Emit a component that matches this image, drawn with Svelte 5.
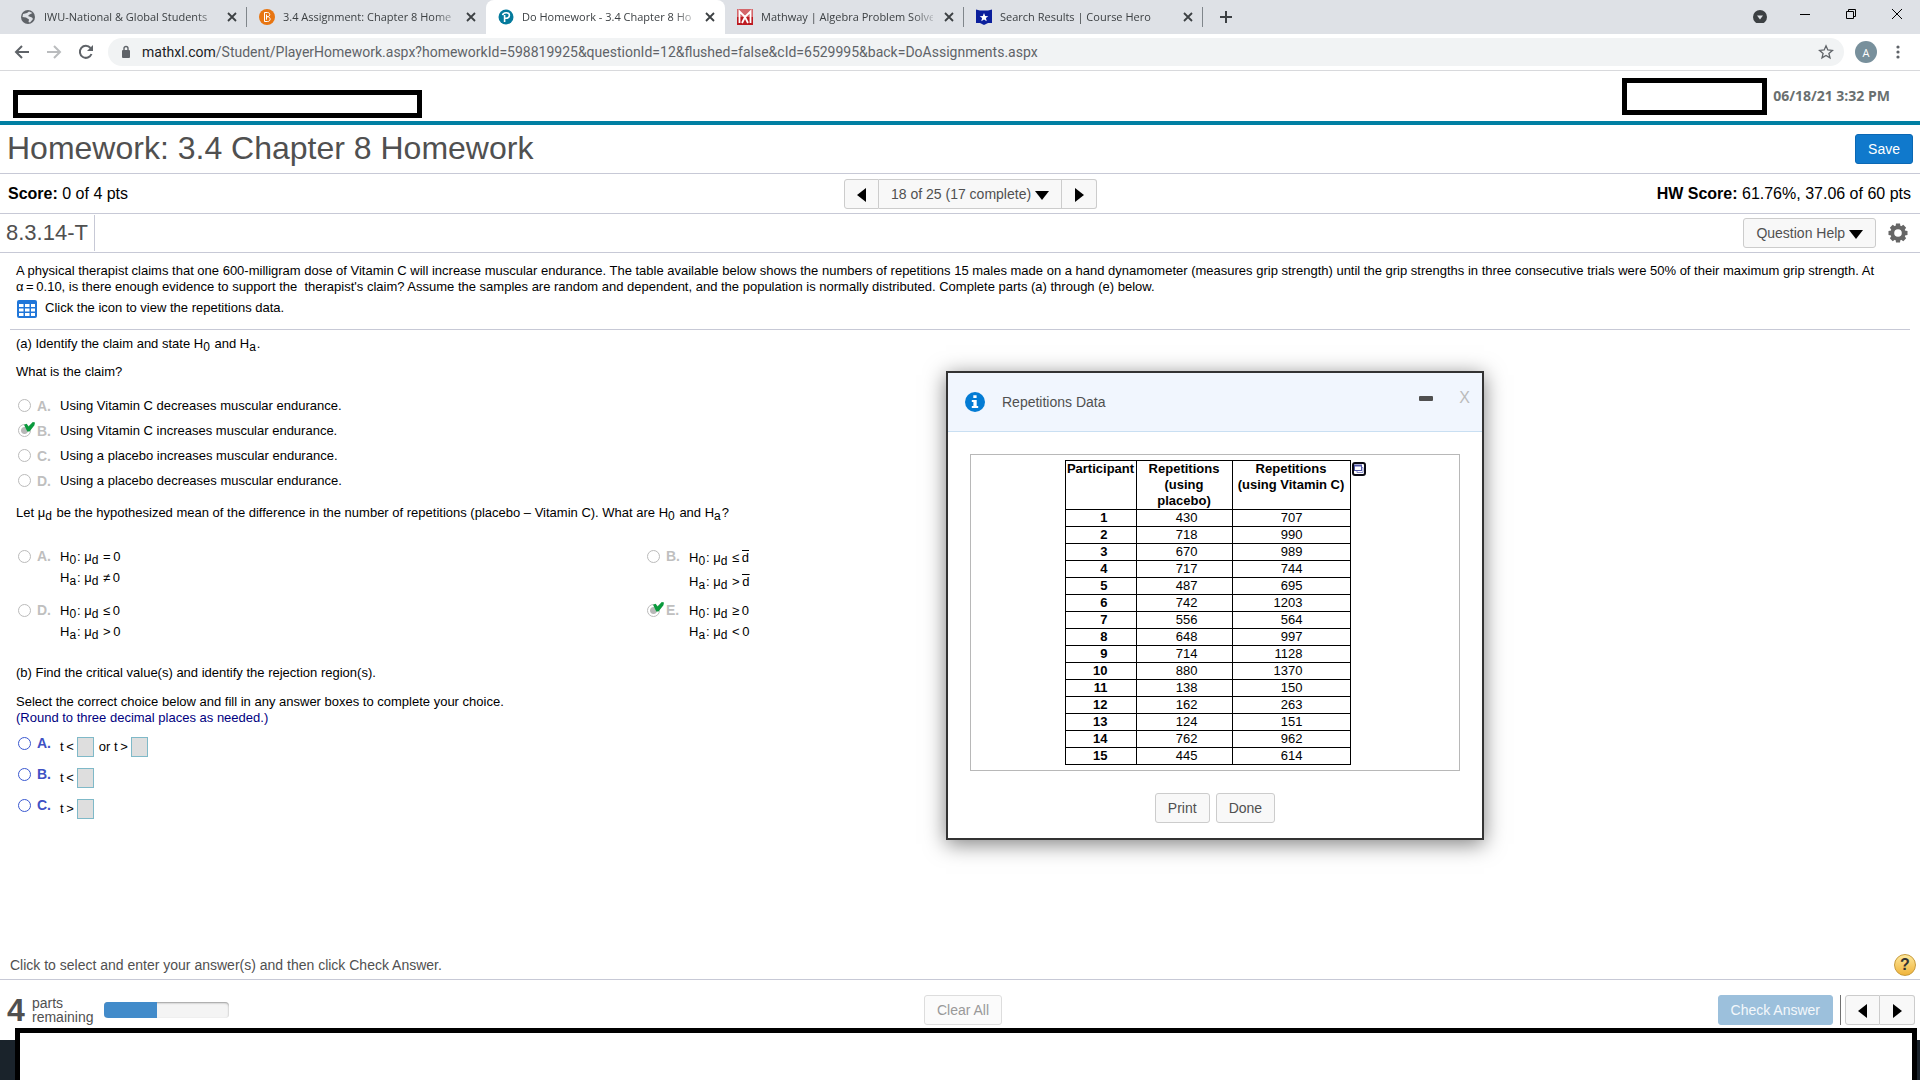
<script>
  const tabs = [
    { icon: 'globe', title: 'IWU-National & Global Students' },
    { icon: 'bright', title: '3.4 Assignment: Chapter 8 Home' },
    { icon: 'pearson', title: 'Do Homework - 3.4 Chapter 8 Ho', active: true },
    { icon: 'mathway', title: 'Mathway | Algebra Problem Solve' },
    { icon: 'hero', title: 'Search Results | Course Hero' }
  ];

  const claims = [
    { letter: 'A', text: 'Using Vitamin C decreases muscular endurance.' },
    { letter: 'B', text: 'Using Vitamin C increases muscular endurance.', chosen: true },
    { letter: 'C', text: 'Using a placebo increases muscular endurance.' },
    { letter: 'D', text: 'Using a placebo decreases muscular endurance.' }
  ];

  const hypotheses = [
    { letter: 'A', nul: '=', alt: '≠', value: '0' },
    { letter: 'B', nul: '≤', alt: '>', value: 'd', bar: true },
    { letter: 'D', nul: '≤', alt: '>', value: '0' },
    { letter: 'E', nul: '≥', alt: '<', value: '0', chosen: true }
  ];

  const regions = [
    { letter: 'A', parts: ['t\u2009<', 'or t\u2009>'] },
    { letter: 'B', parts: ['t\u2009<'] },
    { letter: 'C', parts: ['t\u2009>'] }
  ];

  const data = [
    [430, 707], [718, 990], [670, 989], [717, 744], [487, 695],
    [742, 1203], [556, 564], [648, 997], [714, 1128], [880, 1370],
    [138, 150], [162, 263], [124, 151], [762, 962], [445, 614]
  ];

  const progress = 42;
</script>

{#snippet tick()}
  <svg class="tick" viewBox="0 0 10 9" aria-hidden="true">
    <path d="M0 2.5 L2.5 1.5 L4 4 L8 0 L10 0.5 L9.5 3 L5 8.5 L3 8.5 Z" fill="#0a9a3c" />
  </svg>
{/snippet}

{#snippet arrow(dir)}
  <svg class="arrow {dir}" viewBox="0 0 14 14" aria-hidden="true">
    {#if dir === 'left'}<path d="M11 0 V14 L2 7 Z" />{:else if dir === 'right'}<path d="M3 0 V14 L12 7 Z" />{:else}<path d="M0 3 H14 L7 12 Z" />{/if}
  </svg>
{/snippet}

<div class="page">
  <header class="browser">
    <div class="tabstrip">
      {#each tabs as tab, i}
        <div class="tab" class:active={tab.active} class:divided={i !== 1 && i !== 2}>
          <svg class="favicon" viewBox="0 0 16 16" aria-hidden="true">
            {#if tab.icon === 'globe'}
              <circle cx="8" cy="8" r="7" fill="#5f6368" />
              <path d="M3 5 L7 4 L9 2.5 L12.5 4 L9.5 5.5 L8 7 L12 8.5 L13 10 L10 13.5 L8.5 13 L9 10.5 L6 8.5 L2.5 8" fill="#dee1e6" />
            {:else if tab.icon === 'bright'}
              <circle cx="8" cy="8" r="8" fill="#e87511" />
              <path d="M5.5 3.5 H8.5 C11.5 3.5 11.5 7.5 8.5 7.7 C12 7.8 12 12.5 8.5 12.5 H5.5 Z M7.5 5.5 V10.7 M7.5 7.7 H9" fill="none" stroke="#fff" />
            {:else if tab.icon === 'pearson'}
              <circle cx="8" cy="8" r="7.5" fill="#047a9c" />
              <path d="M6.6 13 V6 M4.6 6.2 C5 3.2 11.3 2.6 11.4 6.2 C11.4 8.6 9.3 9.6 7 9" fill="none" stroke="#fff" stroke-width="1.6" />
            {:else if tab.icon === 'mathway'}
              <rect width="16" height="16" fill="#bd1a20" />
              <rect width="16" height="8" fill="#d4666a" />
              <path d="M2.5 14 V2.5 L8 8 L13.5 2.5 V14 M5 14 L8 8 L11 14" fill="none" stroke="#fff" stroke-width="1.8" />
            {:else}
              <path d="M0 0.5 L4 1.5 H12 L16 0.5 V14 L12 14 L8 16 L4 14 L0 14 Z" fill="#0b1f9c" />
              <path d="M8 4 L9.2 7 L12.3 7.2 L9.9 9.1 L10.7 12.2 L8 10.5 L5.3 12.2 L6.1 9.1 L3.7 7.2 L6.8 7 Z" fill="#fff" />
            {/if}
          </svg>
          <span class="tab-title">{tab.title}</span>
          <button class="icon-button tab-close" aria-label="Close tab">
            <svg viewBox="0 0 16 16"><path d="M4 4 L12 12 M12 4 L4 12" stroke="#3c4043" stroke-width="1.8" /></svg>
          </button>
        </div>
      {/each}
      <button class="icon-button new-tab" aria-label="New tab">
        <svg viewBox="0 0 16 16"><path d="M8 2 V14 M2 8 H14" stroke="#3c4043" stroke-width="2" /></svg>
      </button>
      <div class="window-controls">
        <button class="icon-button" aria-label="Search tabs">
          <svg viewBox="0 0 16 16"><circle cx="9" cy="10" r="7" fill="#3c4043" /><path d="M6 8.5 H12 L9 12.5 Z" fill="#dee1e6" /></svg>
        </button>
        <button class="icon-button" aria-label="Minimize">
          <svg viewBox="0 0 16 16"><path d="M3 7.5 H13" stroke="#000" /></svg>
        </button>
        <button class="icon-button" aria-label="Restore">
          <svg viewBox="0 0 16 16"><path d="M3.5 4.5 H10.5 V11.5 H3.5 Z M5.5 4.5 V2.5 H12.5 V9.5 H10.5" fill="none" stroke="#000" /></svg>
        </button>
        <button class="icon-button" aria-label="Close window">
          <svg viewBox="0 0 16 16"><path d="M3 2 L13 12 M13 2 L3 12" stroke="#000" /></svg>
        </button>
      </div>
    </div>
    <div class="toolbar">
      <button class="icon-button" aria-label="Back">
        <svg viewBox="0 0 16 16"><path d="M15 8 H2 M8 2 L2 8 L8 14" fill="none" stroke="#5f6368" stroke-width="2" /></svg>
      </button>
      <button class="icon-button" aria-label="Forward">
        <svg viewBox="0 0 16 16"><path d="M1 8 H14 M8 2 L14 8 L8 14" fill="none" stroke="#babcbe" stroke-width="2" /></svg>
      </button>
      <button class="icon-button" aria-label="Reload">
        <svg viewBox="0 0 16 16"><path d="M13.5 10 A6 6 0 1 1 12.5 4" fill="none" stroke="#5f6368" stroke-width="2" /><path d="M15 1 V7 H9 Z" fill="#5f6368" /></svg>
      </button>
      <div class="omnibox">
        <svg class="lock" viewBox="0 0 10 14" aria-hidden="true"><rect x="1" y="5" width="8" height="8" rx="1" fill="#5f6368" /><path d="M3 5 V3.5 A2 2 0 0 1 7 3.5 V5" fill="none" stroke="#5f6368" stroke-width="1.4" /></svg>
        <span class="url"><span class="host">mathxl.com</span>/Student/PlayerHomework.aspx?homeworkId=598819925&amp;questionId=12&amp;flushed=false&amp;cId=6529995&amp;back=DoAssignments.aspx</span>
        <button class="icon-button" aria-label="Bookmark this page">
          <svg viewBox="0 0 16 16"><path d="M8 1.8 L9.8 6 L14.4 6.4 L10.9 9.4 L12 13.9 L8 11.5 L4 13.9 L5.1 9.4 L1.6 6.4 L6.2 6 Z" fill="none" stroke="#5f6368" stroke-width="1.3" /></svg>
        </button>
      </div>
      <button class="avatar">A</button>
      <button class="icon-button" aria-label="Browser menu">
        <svg viewBox="0 0 16 16" fill="#5f6368"><circle cx="8" cy="3" r="1.6" /><circle cx="8" cy="8" r="1.6" /><circle cx="8" cy="13" r="1.6" /></svg>
      </button>
    </div>
  </header>

  <div class="banner">
    <div class="blank course"></div>
    <div class="blank user"></div>
    <time class="date">06/18/21 3:32 PM</time>
  </div>

  <div class="bar title-bar">
    <h1>Homework: 3.4 Chapter 8 Homework</h1>
    <button class="btn primary">Save</button>
  </div>

  <div class="bar score-bar">
    <p><b>Score:</b> 0 of 4 pts</p>
    <nav class="group">
      <button class="btn step" aria-label="Previous question">{@render arrow('left')}</button>
      <button class="btn picker">18 of 25 (17 complete) {@render arrow('down')}</button>
      <button class="btn step" aria-label="Next question">{@render arrow('right')}</button>
    </nav>
    <p class="total"><b>HW Score:</b> 61.76%, 37.06 of 60 pts</p>
  </div>

  <div class="bar id-bar">
    <h2>8.3.14-T</h2>
    <button class="btn help">Question Help {@render arrow('down')}</button>
    <button class="icon-button gear" aria-label="Settings">
      <svg viewBox="0 0 20 20">
        <g fill="#666">
          {#each [0, 45, 90, 135] as angle}
            <path d="M8 0.5 H12 L13 6 V14 L12 19.5 H8 L7 14 V6 Z" transform="rotate({angle} 10 10)" />
          {/each}
          <circle cx="10" cy="10" r="7.5" />
        </g>
        <circle cx="10" cy="10" r="3.8" fill="#fff" />
      </svg>
    </button>
  </div>

  <main>
    <section class="prompt">
      <p>A physical therapist claims that one 600-milligram dose of Vitamin C will increase muscular endurance. The table available below shows the numbers of repetitions 15 males made on a hand dynamometer (measures grip strength) until the grip strengths in three consecutive trials were 50% of their maximum grip strength. At<br />α&#8201;=&#8201;0.10, is there enough evidence to support the&nbsp; therapist's claim? Assume the samples are random and dependent, and the population is normally distributed. Complete parts (a) through (e) below.</p>
      <button class="data-link">
        <svg viewBox="0 0 20 18" aria-hidden="true">
          <rect width="20" height="18" rx="2" fill="#2076d9" />
          <path d="M2 4 H6.5 V7 H2 Z M8 4 H12.5 V7 H8 Z M14 4 H18 V7 H14 Z M2 8.5 H6.5 V11.5 H2 Z M8 8.5 H12.5 V11.5 H8 Z M14 8.5 H18 V11.5 H14 Z M2 13 H6.5 V16 H2 Z M8 13 H12.5 V16 H8 Z M14 13 H18 V16 H14 Z" fill="#fff" />
        </svg>
        Click the icon to view the repetitions data.
      </button>
    </section>

    <section class="work">
      <p class="part-a">(a) Identify the claim and state H<sub>0</sub> and H<sub>a</sub>.</p>
      <p class="ask">What is the claim?</p>
      <div class="claims">
        {#each claims as claim}
          <label class="choice">
            <span class="mark"><input type="radio" name="claim" checked={claim.chosen} disabled />{#if claim.chosen}{@render tick()}{/if}</span>
            <b>{claim.letter}.</b>
            <span>{claim.text}</span>
          </label>
        {/each}
      </div>
      <p class="define">Let μ<sub>d</sub> be the hypothesized mean of the difference in the number of repetitions (placebo&nbsp;–&nbsp;Vitamin C). What are H<sub>0</sub> and H<sub>a</sub>?</p>
      <div class="hypotheses">
        {#each hypotheses as h}
          <label class="choice pair">
            <span class="mark"><input type="radio" name="hypothesis" checked={h.chosen} disabled />{#if h.chosen}{@render tick()}{/if}</span>
            <b>{h.letter}.</b>
            <span class="formulas" class:tall={h.bar}>
              <span>H<sub>0</sub>: μ<sub>d</sub> {h.nul}&#8201;<span class:bar-over={h.bar}>{h.value}</span></span>
              <span>H<sub>a</sub>: μ<sub>d</sub> {h.alt}&#8201;<span class:bar-over={h.bar}>{h.value}</span></span>
            </span>
          </label>
        {/each}
      </div>
      <p class="part-b">(b) Find the critical value(s) and identify the rejection region(s).</p>
      <p class="select">Select the correct choice below and fill in any answer boxes to complete your choice.<br /><span class="hint">(Round to three decimal places as needed.)</span></p>
      <div class="regions">
        {#each regions as region}
          <div class="choice open">
            <span class="mark"><input type="radio" name="region" id="region-{region.letter}" /></span>
            <label for="region-{region.letter}"><b>{region.letter}.</b></label>
            <span class="blanks">
              {#each region.parts as part}
                <label>{part}<input type="text" /></label>
              {/each}
            </span>
          </div>
        {/each}
      </div>
    </section>
  </main>

  <footer>
    <div class="instruction">
      <p>Click to select and enter your answer(s) and then click Check Answer.</p>
      <button class="tip" aria-label="Help">?</button>
    </div>
    <div class="actions">
      <div class="remaining">
        <strong>4</strong>
        <span>parts<br />remaining</span>
        <div class="meter" role="progressbar" aria-label="Progress" aria-valuenow={progress}><div style="width: {progress}%"></div></div>
      </div>
      <button class="btn clear">Clear All</button>
      <div class="submit">
        <button class="btn check">Check Answer</button>
        <div class="group">
          <button class="btn step" aria-label="Previous part">{@render arrow('left')}</button>
          <button class="btn step" aria-label="Next part">{@render arrow('right')}</button>
        </div>
      </div>
    </div>
  </footer>
  <div class="taskbar"><div class="blank cover"></div></div>

  <div class="dialog" role="dialog" aria-labelledby="dialog-title">
    <div class="dialog-head">
      <svg class="info" viewBox="0 0 20 20" aria-hidden="true">
        <circle cx="10" cy="10" r="10" fill="#047cd4" />
        <path d="M8.3 3.2 H11.6 V6 H8.3 Z M6.8 8 H11.7 V14 H13.2 V16 H6.8 V14 H8.4 V10 H6.8 Z" fill="#fff" />
      </svg>
      <h3 id="dialog-title">Repetitions Data</h3>
      <button class="icon-button" aria-label="Minimize dialog">
        <svg viewBox="0 0 16 16"><rect x="1" y="5" width="14" height="5" rx="1" fill="#505050" /></svg>
      </button>
      <button class="dismiss" aria-label="Close dialog">X</button>
    </div>
    <div class="dialog-body">
      <div class="sheet">
        <table>
          <thead>
            <tr><th>Participant</th><th>Repetitions (using placebo)</th><th>Repetitions (using Vitamin C)</th></tr>
          </thead>
          <tbody>
            {#each data as row, i}
              <tr><th scope="row">{i + 1}</th><td>{row[0]}</td><td>{row[1]}</td></tr>
            {/each}
          </tbody>
        </table>
        <button class="icon-button expand" aria-label="Open data in a new window">
          <svg viewBox="0 0 14 14"><rect x="1" y="1" width="12" height="12" rx="2" fill="#fff" stroke="#0a0a14" stroke-width="2" /><path d="M5 8.5 V10.5 H11 V5.5 H10" fill="none" stroke="#8c90cc" /><rect x="2.5" y="3.5" width="7" height="5" fill="#fff" stroke="#5056a8" /><path d="M2 3.5 H10" stroke="#5056a8" stroke-width="2" /></svg>
        </button>
      </div>
      <div class="dialog-actions">
        <button class="btn">Print</button>
        <button class="btn">Done</button>
      </div>
    </div>
  </div>
</div>

<style>
  :global(body) { margin: 0; background: #fff; }
  .page { position: relative; display: flex; flex-direction: column; min-height: 100vh; box-sizing: border-box; font: 13px/16px "Liberation Sans", Arial, sans-serif; color: #000; }
  .page * { box-sizing: border-box; }
  h1, h2, h3, p { margin: 0; font-weight: normal; }
  button { font-family: inherit; cursor: pointer; }
  .icon-button { display: block; flex: none; width: 16px; height: 16px; padding: 0; border: 0; background: none; }
  .icon-button svg { display: block; width: 100%; height: 100%; }

  .browser { font-family: "Open Sans", "Noto Sans", sans-serif; }
  .tabstrip { display: flex; align-items: stretch; height: 34px; padding-left: 8px; background: #dee1e6; }
  .tab { position: relative; display: flex; align-items: center; flex: 0 1 239px; min-width: 0; gap: 8px; padding: 0 7px 0 12px; font-size: 11px; color: #3c4043; }
  .tab.active { background: #fff; border-radius: 8px 8px 0 0; }
  .tab.divided::after { content: ""; position: absolute; right: 0; top: 7px; width: 1px; height: 20px; background: #80868b; }
  .favicon { flex: none; width: 16px; height: 16px; }
  .tab-title { flex: 1; min-width: 0; overflow: hidden; white-space: nowrap; mask-image: linear-gradient(to right, #000 88%, transparent 104%); }
  .new-tab { align-self: center; margin-left: 15px; }
  .window-controls { display: flex; align-items: center; gap: 30px; margin-left: auto; padding: 0 15px 4px 0; }
  .toolbar { display: flex; align-items: center; height: 37px; gap: 16px; padding: 0 14px; border-bottom: 1px solid #d8d9dc; }
  .omnibox { display: flex; align-items: center; flex: 1; min-width: 0; height: 28px; margin-left: -2px; padding: 0 10px 0 13px; border-radius: 14px; background: #f1f3f4; }
  .lock { flex: none; width: 10px; height: 14px; margin-right: 11px; }
  .url { flex: 1; min-width: 0; overflow: hidden; white-space: nowrap; font: 14px/20px Roboto, "Open Sans", sans-serif; color: #5f6368; }
  .host { color: #202124; }
  .avatar { flex: none; width: 22px; height: 22px; margin: 0 -3px 0 -5px; padding: 0; border: 0; border-radius: 50%; background: #78909c; color: #fff; font-size: 11px; }

  .banner { display: flex; align-items: center; height: 54px; padding: 0 30px 0 13px; border-bottom: 4px solid #007fa3; }
  .blank { border: 5px solid #000; background: #fff; }
  .course { width: 409px; height: 28px; margin: 16px auto 0 0; }
  .user { width: 145px; height: 37px; margin-right: 6px; }
  .date { font: bold 14px/20px "Open Sans", sans-serif; color: #6a7070; }

  .bar { display: flex; align-items: center; border-bottom: 1px solid #c7c9d6; }
  .btn { height: 30px; padding: 0 12px; border: 1px solid #ccc; border-radius: 3px; background: #f8f8f8; color: #505050; font-size: 14px; line-height: 16px; white-space: nowrap; }
  .arrow { width: 14px; height: 14px; vertical-align: -3px; }
  .group { display: flex; }
  .group .btn { border-radius: 0; }
  .group .btn + .btn { border-left: 0; }
  .group .btn:first-child { border-radius: 3px 0 0 3px; }
  .group .btn:last-child { border-radius: 0 3px 3px 0; }
  .step { width: 35px; padding: 0; }
  .title-bar { justify-content: space-between; height: 49px; padding: 0 7px 0 7px; }
  h1 { font-size: 32px; line-height: 36px; color: #505050; }
  .title-bar h1 { padding-bottom: 3px; }
  .primary { border-color: #0b68b4; background: #1079cc; color: #fff; }
  .score-bar { display: grid; grid-template-columns: 1fr auto 1fr; height: 40px; padding: 0 9px 0 8px; font-size: 16px; }
  .score-bar .group { margin-left: 22px; }
  .total { text-align: right; }
  .picker { width: 183px; padding: 0 8px 0 12px; text-align: left; }
  .id-bar { height: 39px; padding: 0 12px 0 0; }
  h2 { display: flex; align-items: center; height: 36px; margin-right: auto; padding: 0 6px; border-right: 1px solid #c7c9d6; font-size: 22px; line-height: 24px; color: #505050; }
  .gear { width: 20px; height: 20px; margin-left: 12px; }

  main { padding: 10px 10px 0; }
  .prompt { padding: 0 6px 11px; border-bottom: 1px solid #c7c9d6; }
  .data-link { display: flex; align-items: flex-start; gap: 8px; height: 18px; margin-top: 5px; padding: 0 0 0 1px; border: 0; background: none; color: #000; font-size: 13px; line-height: 16px; }
  .data-link svg { width: 20px; height: 18px; }
  .work { padding: 6px 6px 0; }
  sub { margin-right: 1px; font-size: 12px; line-height: 0; vertical-align: -3px; }
  .ask { margin-top: 12px; }
  .claims { margin-top: 13px; }
  .choice { display: flex; align-items: center; padding-left: 2px; }
  .claims .choice { height: 25px; }
  .mark { position: relative; display: flex; flex: none; width: 19px; }
  .choice b { flex: none; width: 23px; color: #bfbfbf; font-size: 14px; }
  input[type="radio"] { appearance: none; width: 13px; height: 13px; margin: 0; border: 1px solid #bbb; border-radius: 50%; background: #fff; }
  input[type="radio"]:checked { background: radial-gradient(circle, #b8b8b8 3px, #fff 4px); }
  .tick { position: absolute; left: 6px; top: -2px; width: 11px; height: 10px; }
  .pair .tick { top: 2px; }
  .define { margin-top: 12px; }
  .hypotheses { display: grid; grid-template-columns: 629px 1fr; row-gap: 6px; margin-top: 25px; }
  .pair { align-items: flex-start; }
  .pair .mark { height: 21px; align-items: center; }
  .pair b { line-height: 21px; }
  .formulas { display: flex; flex-direction: column; line-height: 21px; }
  .formulas.tall { line-height: 24px; }
  .bar-over { background: linear-gradient(#000, #000) top / 100% 1px no-repeat; }
  .part-b { margin-top: 23px; }
  .select { margin-top: 13px; }
  .hint { color: #00007f; }
  .regions { display: flex; flex-direction: column; gap: 11px; margin-top: 11px; }
  .open { align-items: flex-start; }
  .open input[type="radio"] { border-color: #3a58d0; }
  .open b { display: block; line-height: 13px; color: #3f51c4; }
  .blanks { display: flex; gap: 5px; }
  .blanks label { display: flex; align-items: center; gap: 3px; white-space: pre; }
  .blanks input { width: 17px; height: 20px; padding: 0; border: 1px solid #7fb9c8; border-radius: 0; background: #dedede; }

  footer { margin-top: auto; color: #505050; }
  .instruction { display: flex; align-items: center; justify-content: space-between; height: 29px; padding: 0 4px 0 10px; border-bottom: 1px solid #c7c9d6; font-size: 14px; }
  .tip { width: 22px; height: 22px; padding: 0; border: 1px solid #c79a3a; border-radius: 50%; background: linear-gradient(#fde79a, #f0b43c); color: #333; font-size: 16px; font-weight: bold; line-height: 18px; }
  .actions { display: grid; grid-template-columns: 1fr auto 1fr; align-items: center; height: 48px; padding: 12px 5px 0 7px; font-size: 14px; line-height: 14px; }
  .remaining { display: flex; align-items: center; }
  strong { width: 25px; font-size: 32px; line-height: 30px; }
  .meter { width: 125px; height: 16px; margin-left: 11px; overflow: hidden; border-radius: 4px; background: #f4f4f4; box-shadow: inset 0 1px 2px #999; }
  .meter div { height: 100%; background: #428bca; }
  .clear { margin-left: 4px; color: #999; background: #fbfbfb; border-color: #ddd; }
  .submit { display: flex; justify-content: flex-end; }
  .check { border-color: #9cc0dc; background: #9cc0dc; color: #f4f8fb; }
  .submit .group { margin-left: 7px; padding-left: 4px; border-left: 1px solid #707070; }
  .taskbar { display: flex; height: 52px; padding: 0 3px 0 15px; background: linear-gradient(#fff 12px, #1a232b 12px); }
  .cover { flex: 1; border-bottom: 0; }

  .dialog { position: absolute; left: 946px; top: 371px; width: 538px; border: 2px solid #333; background: #fff; box-shadow: 0 4px 20px rgba(0, 0, 0, 0.5); color: #505050; }
  .dialog-head { display: flex; align-items: center; height: 59px; padding: 0 12px 0 17px; border-bottom: 1px solid #c9dff2; background: #f1f6fe; }
  .info { width: 20px; height: 20px; margin-right: 17px; }
  h3 { margin-right: auto; font-size: 14px; line-height: 16px; }
  .dialog-head .icon-button { margin: 0 25px 6px 0; }
  .dismiss { margin-bottom: 8px; padding: 0; border: 0; background: none; color: #bbb; font-size: 16px; line-height: 16px; }
  .dialog-body { padding: 22px 22px 15px; }
  .sheet { display: flex; justify-content: center; padding: 5px 0; border: 1px solid #b8b8b8; }
  table { width: 286px; border-collapse: collapse; table-layout: fixed; color: #000; }
  th, td { height: 17px; padding: 0; border: 1px solid #000; line-height: 16px; text-align: right; }
  thead th { height: 49px; padding: 0 8px; text-align: center; vertical-align: top; }
  thead th:first-child { width: 71px; padding: 0; }
  thead th:nth-child(2) { width: 96px; }
  thead th:nth-child(3) { padding: 0 3px; }
  tbody th { padding-right: 28px; }
  tbody td { padding-right: 34px; }
  tbody td:last-child { padding-right: 47px; }
  .expand { width: 14px; height: 14px; margin: 2px 0 0 1px; }
  .dialog-actions { display: flex; justify-content: center; gap: 6px; margin-top: 22px; }
</style>
